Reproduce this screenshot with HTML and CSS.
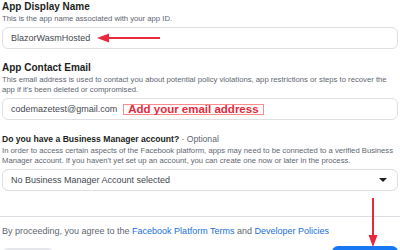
FILE: index.html
```html
<!DOCTYPE html>
<html lang="en">
<head>
  <meta charset="UTF-8" />
  <meta name="viewport" content="width=device-width, initial-scale=1.0" />
  <title>App Settings</title>
  <link rel="stylesheet" href="styles.css">
</head>
<body>
  <div class="form">
    <div class="field">
      <div class="label">App Display Name</div>
      <div class="hint">This is the app name associated with your app ID.</div>
      <div class="input">
        <span>BlazorWasmHosted</span>
        <svg class="arrow-left" width="64" height="10" viewBox="0 0 64 10">
          <line x1="8" y1="5" x2="63" y2="5" stroke="#e8283c" stroke-width="2" />
          <polygon points="0,5 12,0.5 12,9.5" fill="#e8283c" />
        </svg>
      </div>
    </div>

    <div class="field">
      <div class="label">App Contact Email</div>
      <div class="hint">This email address is used to contact you about potential policy violations, app restrictions or steps to recover the app if it's been deleted or compromised.</div>
      <div class="input">
        <span>codemazetest@gmail.com</span>
        <span class="note">Add your email address</span>
      </div>
    </div>

    <div class="field">
      <div class="label small">Do you have a Business Manager account? <span class="optional">· Optional</span></div>
      <div class="hint">In order to access certain aspects of the Facebook platform, apps may need to be connected to a verified Business Manager account. If you haven't yet set up an account, you can create one now or later in the process.</div>
      <div class="input select">
        <span>No Business Manager Account selected</span>
        <span class="caret"></span>
      </div>
    </div>

    <div class="footer">
      By proceeding, you agree to the <a href="#">Facebook Platform Terms</a> and <a href="#">Developer Policies</a>
    </div>

    <div class="buttons">
      <button class="btn cancel" aria-label="Cancel"></button>
      <button class="btn primary" aria-label="Create App"></button>
    </div>
  </div>

  <svg class="arrow-down" width="10" height="50" viewBox="0 0 10 50">
    <line x1="5" y1="0" x2="5" y2="40" stroke="#e8283c" stroke-width="2" />
    <polygon points="0.5,37 9.5,37 5,49" fill="#e8283c" />
  </svg>
</body>
</html>
```

FILE: styles.css
```css
:root {
  --text: #1c1e21;
  --muted: #606770;
  --border: #dddfe2;
  --blue: #1877f2;
  --link: #216fdb;
  --red: #e8283c;
}

body {
  font-family: "Liberation Sans", Arial, sans-serif;
  margin: 0;
  padding: 0 2px;
  color: var(--text);
  background: #ffffff;
  overflow: hidden;
  height: 250px;
  position: relative;
}

.field {
  margin-bottom: 12px;
}

.label {
  font-size: 10px;
  line-height: 14px;
  font-weight: bold;
}

.label.small {
  font-size: 8.6px;
}

.optional {
  font-weight: normal;
  color: var(--muted);
}

.hint {
  font-size: 7.7px;
  line-height: 10px;
  margin-right: -2px;
  color: var(--muted);
}

.input {
  display: flex;
  align-items: center;
  gap: 7px;
  box-sizing: border-box;
  height: 22px;
  margin-top: 3px;
  padding: 0 8px;
  border: 1px solid var(--border);
  border-radius: 6px;
  font-size: 9px;
  color: #444950;
}

.note {
  font-weight: bold;
  font-size: 11.5px;
  line-height: 9px;
  color: var(--red);
  border: 1px solid #ff8a8a;
  padding: 0 4px;
  margin-left: -1px;
  white-space: nowrap;
}

.select {
  justify-content: space-between;
}

.caret {
  width: 0;
  height: 0;
  border-left: 4px solid transparent;
  border-right: 4px solid transparent;
  border-top: 4px solid #1c1e21;
  margin-right: 2px;
}

.footer {
  margin: 25px -2px 0;
  padding: 8px 2px 0;
  border-top: 1px solid #dadde1;
  font-size: 9px;
  line-height: 12px;
  color: var(--muted);
}

.footer a {
  color: var(--link);
  text-decoration: none;
}

.buttons {
  display: flex;
  justify-content: space-between;
  margin-top: 9px;
}

.btn {
  border: none;
  border-radius: 6px;
  height: 28px;
}

.cancel {
  width: 52px;
  margin-top: 2px;
  background: #e4e6eb;
}

.primary {
  width: 66px;
  background: var(--blue);
}

.arrow-down {
  position: absolute;
  left: 368px;
  top: 198px;
}
```
